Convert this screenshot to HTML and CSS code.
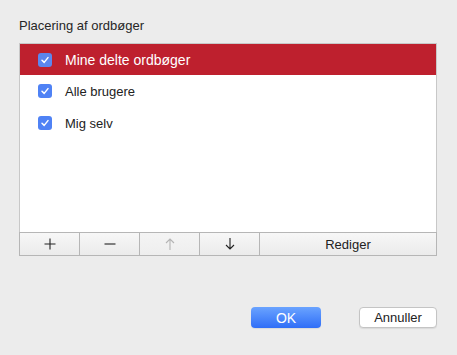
FILE: index.html
```html
<!DOCTYPE html>
<html>
<head>
  <title>Placering af ordbøger</title>
  <link rel="stylesheet" href="styles.css">
</head>
<body>
  <div class="dialog">
    <div class="title">Placering af ordbøger</div>

    <div class="list">
      <div class="row selected">
        <span class="check"><svg width="10" height="10" viewBox="0 0 10 10"><path d="M2 5.2 L4.2 7.4 L8 2.6" fill="none" stroke="#fff" stroke-width="1.5" stroke-linecap="round" stroke-linejoin="round"/></svg></span>
        <span class="label">Mine delte ordbøger</span>
      </div>
      <div class="row">
        <span class="check"><svg width="10" height="10" viewBox="0 0 10 10"><path d="M2 5.2 L4.2 7.4 L8 2.6" fill="none" stroke="#fff" stroke-width="1.5" stroke-linecap="round" stroke-linejoin="round"/></svg></span>
        <span class="label">Alle brugere</span>
      </div>
      <div class="row">
        <span class="check"><svg width="10" height="10" viewBox="0 0 10 10"><path d="M2 5.2 L4.2 7.4 L8 2.6" fill="none" stroke="#fff" stroke-width="1.5" stroke-linecap="round" stroke-linejoin="round"/></svg></span>
        <span class="label">Mig selv</span>
      </div>
    </div>

    <div class="toolbar">
      <div class="tool">
        <svg width="12" height="12" viewBox="0 0 12 12"><path d="M6 0.5 V11.5 M0.5 6 H11.5" stroke="#222" stroke-width="1.1"/></svg>
      </div>
      <div class="tool">
        <svg width="12" height="12" viewBox="0 0 12 12"><path d="M0.5 6 H11.5" stroke="#222" stroke-width="1.1"/></svg>
      </div>
      <div class="tool disabled">
        <svg width="10" height="12" viewBox="0 0 10 12"><path d="M5 1 V12 M1 5 L5 1 L9 5" fill="none" stroke="#b4b4b4" stroke-width="1.1"/></svg>
      </div>
      <div class="tool">
        <svg width="10" height="12" viewBox="0 0 10 12"><path d="M5 0 V11 M1 7 L5 11 L9 7" fill="none" stroke="#222" stroke-width="1.1"/></svg>
      </div>
      <div class="tool wide">Rediger</div>
    </div>

    <div class="actions">
      <button class="btn primary">OK</button>
      <button class="btn">Annuller</button>
    </div>
  </div>
</body>
</html>
```

FILE: styles.css
```css
body {
  margin: 0;
  background-color: #ececec;
  font-family: "Liberation Sans", Arial, sans-serif;
  font-size: 13px;
  color: #222;
}

.dialog {
  width: 457px;
  height: 355px;
  padding: 19px 20px 0 19px;
  box-sizing: border-box;
}

.title {
  height: 24px;
  line-height: 14px;
  color: #262626;
}

.list {
  height: 188px;
  background-color: #fff;
  border: 1px solid #c8c8c8;
  border-bottom: none;
}

.row {
  display: flex;
  align-items: center;
  height: 32px;
  padding-left: 18px;
}

.row.selected {
  background-color: #be202e;
  color: #fff;
  height: 31px;
  font-size: 14px;
}

.check {
  width: 14px;
  height: 14px;
  border-radius: 3px;
  background-color: #4f82f5;
  display: flex;
  align-items: center;
  justify-content: center;
  margin-right: 13px;
}

.row.selected .check {
  background-color: #5c86ee;
}

.toolbar {
  display: flex;
  height: 24px;
  border: 1px solid #b6b6b6;
  box-sizing: border-box;
  background: linear-gradient(#f7f7f7, #ebebeb);
}

.tool {
  width: 59px;
  border-right: 1px solid #b6b6b6;
  display: flex;
  align-items: center;
  justify-content: center;
  color: #222;
}

.tool.disabled {
  background: linear-gradient(#f4f4f4, #eeeeee);
}

.tool.wide {
  flex: 1;
  border-right: none;
  font-size: 13px;
}

.actions {
  display: flex;
  justify-content: flex-end;
  gap: 38px;
  margin-top: 51px;
}

.btn {
  height: 21px;
  width: 78px;
  border: 1px solid #c4c4c4;
  border-radius: 4px;
  background-color: #fff;
  font-family: "Liberation Sans", Arial, sans-serif;
  font-size: 13px;
  color: #222;
  padding: 0;
  box-shadow: 0 1px 1px rgba(0, 0, 0, 0.08);
}

.btn.primary {
  width: 70px;
  border: none;
  color: #fff;
  font-size: 14px;
  background: linear-gradient(#6aa3ff, #2f6ef7);
}
```
